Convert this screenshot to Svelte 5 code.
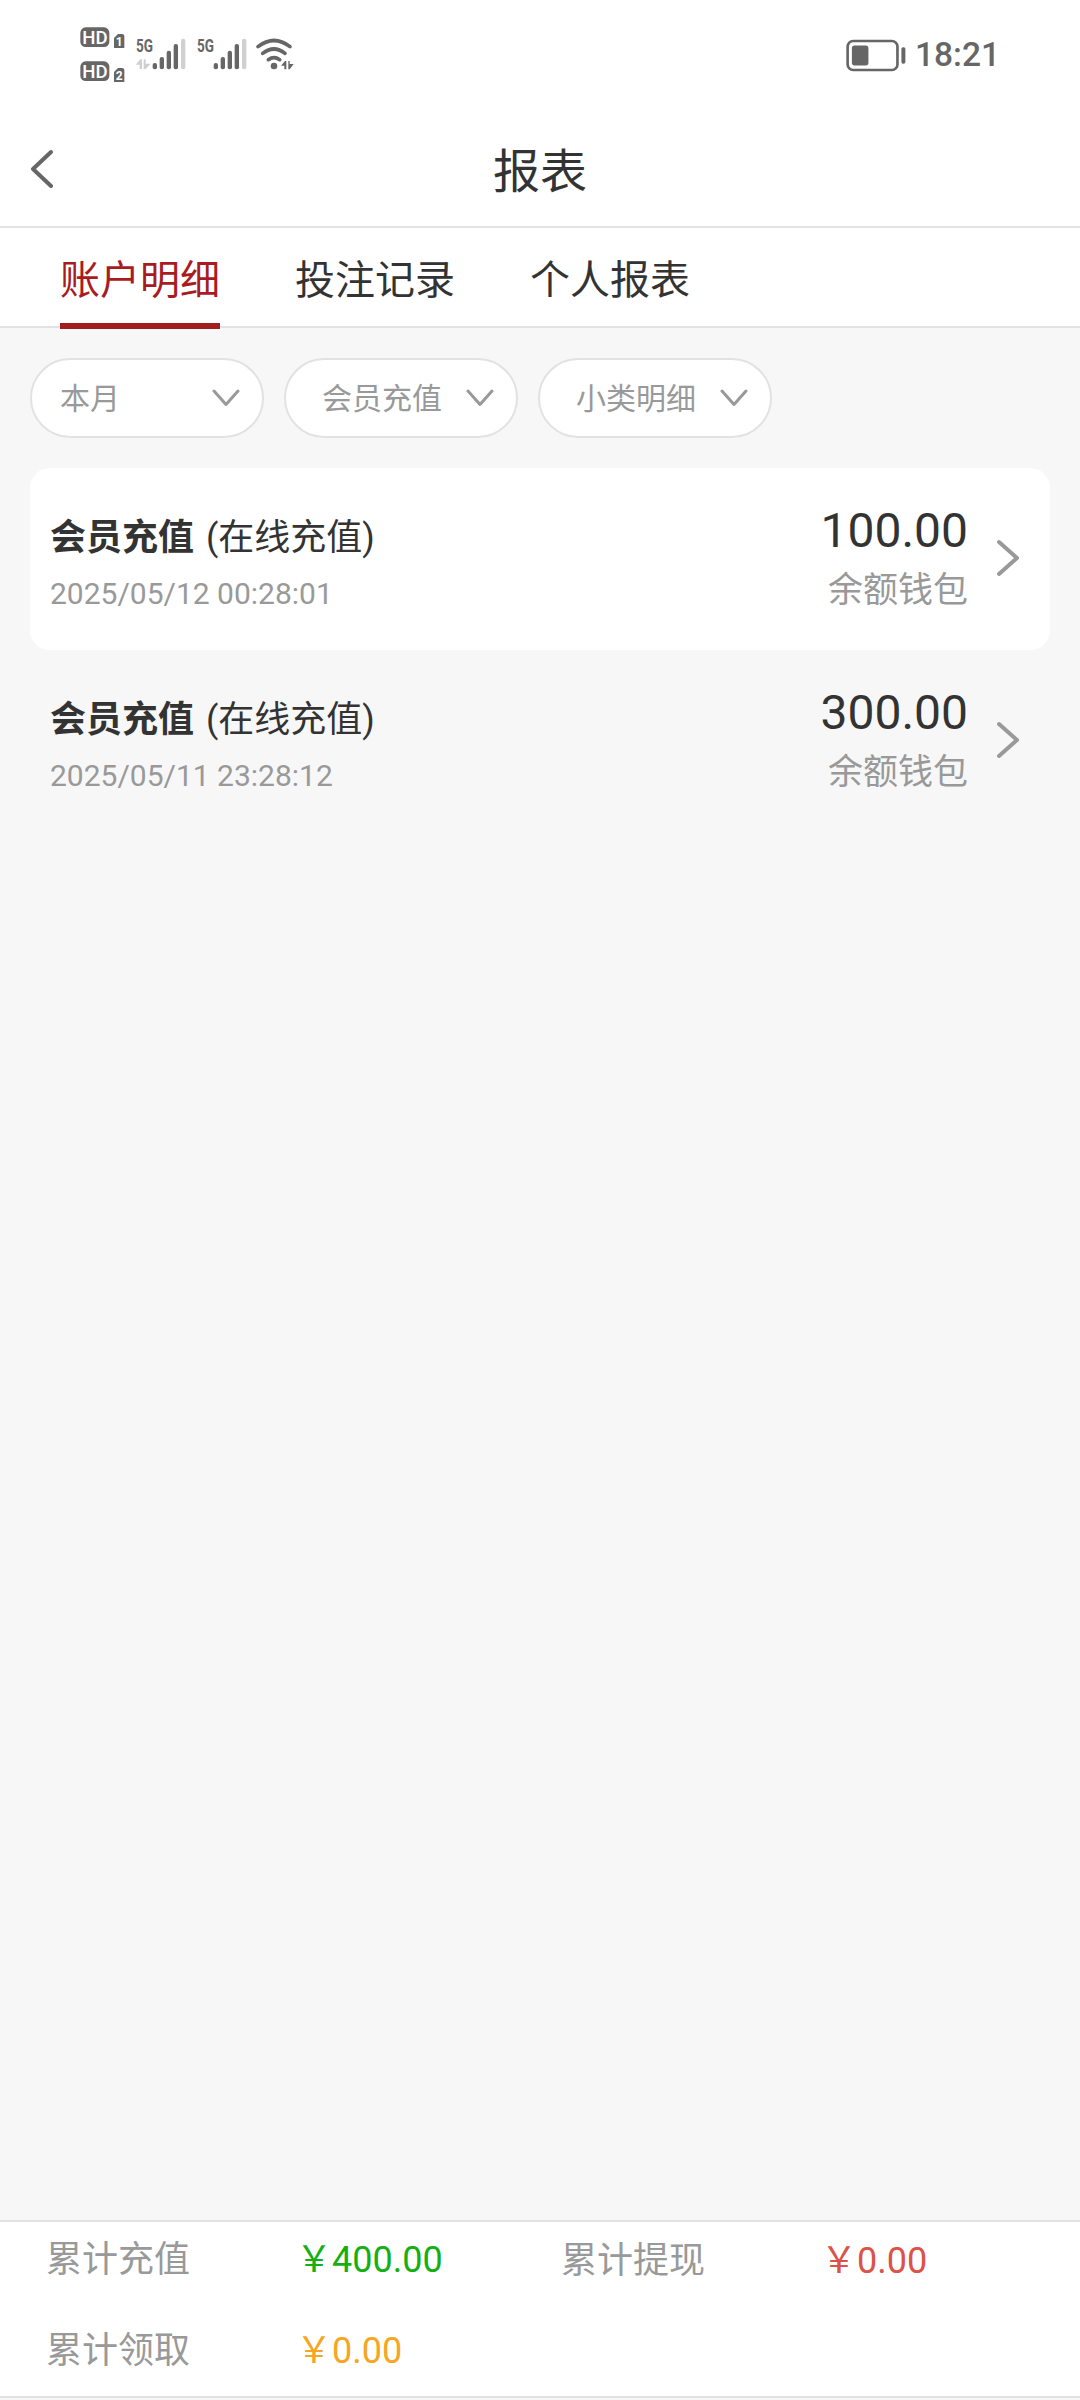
<script>
	let activeTab = 0;

	const tabs = ['账户明细', '投注记录', '个人报表'];

	const filters = [
		{ label: '本月', wide: true },
		{ label: '会员充值' },
		{ label: '小类明细' }
	];

	const records = [
		{ type: '会员充值', detail: '(在线充值)', time: '2025/05/12 00:28:01', amount: '100.00', wallet: '余额钱包' },
		{ type: '会员充值', detail: '(在线充值)', time: '2025/05/11 23:28:12', amount: '300.00', wallet: '余额钱包' }
	];

	const totals = [
		{ label: '累计充值', value: '400.00', tone: 'green' },
		{ label: '累计提现', value: '0.00', tone: 'red' },
		{ label: '累计领取', value: '0.00', tone: 'orange' }
	];
</script>

<div class="page">
	<!-- Phone status bar -->
	<div class="status-bar">
		<svg class="status-icons" viewBox="0 0 780 270" fill="#666" aria-hidden="true">
			{#each ['1', '2'] as sim, i}
				<g transform="translate(0 {i * 102})">
					<rect x="61" y="52" width="87" height="59" rx="16" />
					<text class="hd" x="67" y="102" textLength="76" lengthAdjust="spacingAndGlyphs">HD</text>
					<path d="M174 72h12q7 0 7 7v35h-31v-30z" />
					<text class="sim" x="167" y="108">{sim}</text>
				</g>
			{/each}

			<text class="net" x="228" y="125" textLength="51" lengthAdjust="spacingAndGlyphs">5G</text>
			<path d="M227 164l14-16h5v29h-7v-13zM251 148h6v13h15l-15 16h-6z" fill="#d0d0d0" />
			<text class="net" x="411" y="125" textLength="51" lengthAdjust="spacingAndGlyphs">5G</text>

			{#each [0, 183] as dx}
				<g transform="translate({dx} 0)">
					<rect x="278" y="159" width="13" height="19" rx="6" />
					<rect x="299" y="141" width="13" height="37" rx="6" />
					<rect x="320" y="122" width="13" height="56" rx="6" />
					<rect x="341" y="102" width="13" height="76" rx="6" />
					<rect x="363" y="86" width="13" height="92" rx="6" fill="#d0d0d0" />
				</g>
			{/each}

			<g fill="none" stroke="#666" stroke-width="11" stroke-linecap="round">
				<path d="M594 110q48 -37 96 0" />
				<path d="M608 130q34 -26 67 0" />
				<path d="M625 149q17 -12 34 0" />
			</g>
			<circle cx="642" cy="168" r="10" />
			<path d="M663 167l12-14h4v25h-6v-11zM685 153h4v9h12l-12 16h-4z" />
		</svg>

		<div class="status-right">
			<svg class="battery" viewBox="0 0 180 100" aria-hidden="true">
				<rect x="4" y="6" width="151" height="88" rx="17" fill="none" stroke="#666" stroke-width="8" />
				<rect x="17" y="20" width="50" height="60" rx="8" fill="#666" />
				<rect x="167" y="25" width="12" height="50" rx="5" fill="#666" />
			</svg>
			<span class="clock">18:21</span>
		</div>
	</div>

	<!-- Header -->
	<header class="header">
		<button class="back" type="button" aria-label="返回">
			<svg width="24" height="40" viewBox="0 0 24 40" fill="none" stroke="#666" stroke-width="4" stroke-linecap="round" stroke-linejoin="round">
				<path d="M21 4L3 21l18 17" />
			</svg>
		</button>
		<h1>报表</h1>
	</header>

	<!-- Tabs -->
	<nav class="tabs">
		{#each tabs as tab, index}
			<button type="button" class="tab" class:active={activeTab === index} on:click={() => (activeTab = index)}>
				{tab}
			</button>
		{/each}
	</nav>

	<main class="content">
		<div class="filters">
			{#each filters as filter}
				<button type="button" class="filter" class:wide={filter.wide}>
					<span>{filter.label}</span>
					<svg width="28" height="18" viewBox="0 0 28 18" fill="none" stroke="#999" stroke-width="3" stroke-linecap="round" stroke-linejoin="round">
						<path d="M2 2l12 13.5L26 2" />
					</svg>
				</button>
			{/each}
		</div>

		<div class="records">
			{#each records as record}
				<article class="record">
					<div class="info">
						<p class="name"><strong>{record.type}</strong><span>{record.detail}</span></p>
						<p class="time">{record.time}</p>
					</div>
					<div class="money">
						<p class="amount">{record.amount}</p>
						<p class="wallet">{record.wallet}</p>
					</div>
					<svg class="arrow" width="24" height="38" viewBox="0 0 24 38" fill="none" stroke="#999" stroke-width="4" stroke-linecap="round" stroke-linejoin="round">
						<path d="M3 3l18 16L3 35" />
					</svg>
				</article>
			{/each}
		</div>
	</main>

	<!-- Totals -->
	<footer class="totals">
		{#each totals as total}
			<div class="total">
				<span class="label">{total.label}</span>
				<span class="value {total.tone}"><span class="yen">&#xFFE5;</span>{total.value}</span>
			</div>
		{/each}
	</footer>
</div>

<style>
	:global(body) {
		background: #f7f7f7;
	}

	.page {
		display: flex;
		flex-direction: column;
		width: 1080px;
		height: 2398px;
		font-family: Roboto, 'Noto Sans CJK SC', sans-serif;
		color: #333;
		background: #f7f7f7;
	}

	button {
		border: none;
		background: none;
		padding: 0;
		margin: 0;
		font: inherit;
		color: inherit;
	}

	p,
	h1 {
		margin: 0;
		font-weight: 400;
	}

	svg {
		display: block;
		flex: none;
	}

	/* Status bar */
	.status-bar {
		display: flex;
		justify-content: space-between;
		align-items: center;
		height: 110px;
		padding: 0 80px 0 60px;
		box-sizing: border-box;
		background: #fff;
	}

	.status-icons {
		width: 260px;
		height: 90px;
	}

	.hd {
		font-size: 57px;
		font-weight: 500;
		fill: #fff;
	}

	.sim {
		font-size: 36px;
		font-weight: 700;
		fill: #fff;
	}

	.net {
		font-size: 56px;
		font-weight: 700;
	}

	.status-right {
		display: flex;
		align-items: center;
		gap: 9px;
	}

	.battery {
		width: 60px;
		height: 33px;
	}

	.clock {
		font-size: 33.5px;
		font-weight: 500;
		line-height: 40px;
		color: #666;
	}

	/* Header */
	.header {
		display: grid;
		grid-template-columns: 90px 1fr 90px;
		align-items: center;
		height: 118px;
		box-sizing: border-box;
		border-bottom: 2px solid #e2e2e2;
		background: #fff;
	}

	.back {
		padding-left: 30px;
	}

	h1 {
		padding-top: 8px;
		font-size: 47px;
		line-height: 60px;
		text-align: center;
	}

	/* Tabs */
	.tabs {
		display: flex;
		gap: 75px;
		height: 100px;
		padding: 0 60px;
		box-sizing: border-box;
		border-bottom: 2px solid #e2e2e2;
		background: #fff;
	}

	.tab {
		height: 101px;
		padding-top: 10px;
		box-sizing: border-box;
		border-bottom: 6px solid transparent;
		font-size: 40px;
		line-height: 85px;
	}

	.tab.active {
		color: #a81c1f;
		border-bottom-color: #a31c1f;
	}

	/* Filters */
	.content {
		flex: 1;
		padding: 30px;
	}

	.filters {
		display: flex;
		gap: 20px;
	}

	.filter {
		display: flex;
		justify-content: space-between;
		align-items: center;
		width: 234px;
		height: 80px;
		padding: 0 22px 0 36px;
		box-sizing: border-box;
		border: 2px solid #e2e2e2;
		border-radius: 40px;
		font-size: 30px;
		line-height: 40px;
		color: #999;
		background: #fff;
	}

	.filter span {
		padding-top: 2px;
	}

	.filter.wide {
		padding-left: 28px;
	}

	/* Records */
	.records {
		margin-top: 30px;
	}

	.record {
		display: flex;
		height: 182px;
		padding: 35px 30px 0 20px;
		box-sizing: border-box;
		border-radius: 20px;
	}

	.record:nth-child(odd) {
		background: #fff;
	}

	.info {
		flex: 1;
		padding-top: 10px;
	}

	.name {
		display: flex;
		gap: 12px;
		font-size: 36px;
		line-height: 50px;
	}

	.time {
		margin-top: 11px;
		font-size: 30px;
		line-height: 40px;
		color: #999;
	}

	.money {
		text-align: right;
	}

	.amount {
		font-size: 48px;
		line-height: 56px;
	}

	.wallet {
		margin-top: 10px;
		font-size: 35px;
		line-height: 44px;
		color: #999;
	}

	.arrow {
		margin: 36px 0 0 28px;
	}

	/* Totals */
	.totals {
		display: grid;
		grid-template-columns: 515px 1fr;
		grid-auto-rows: 91px;
		height: 178px;
		padding: 0 46px;
		box-sizing: border-box;
		border-top: 2px solid #e2e2e2;
		border-bottom: 2px solid #e2e2e2;
		font-size: 36px;
		line-height: 76px;
		background: #fff;
	}

	.total {
		display: flex;
	}

	.label {
		width: 250px;
		color: #999;
	}

	.total:nth-child(2) {
		padding-top: 1px;
	}

	.total:nth-child(2) .label {
		width: 260px;
	}

	.yen {
		display: inline-block;
		width: 36px;
		font-family: 'Noto Sans CJK SC', sans-serif;
		line-height: 38px;
		text-align: center;
	}

	.green {
		color: #13b013;
	}

	.red {
		color: #dc5247;
	}

	.orange {
		color: #f5a623;
	}
</style>
